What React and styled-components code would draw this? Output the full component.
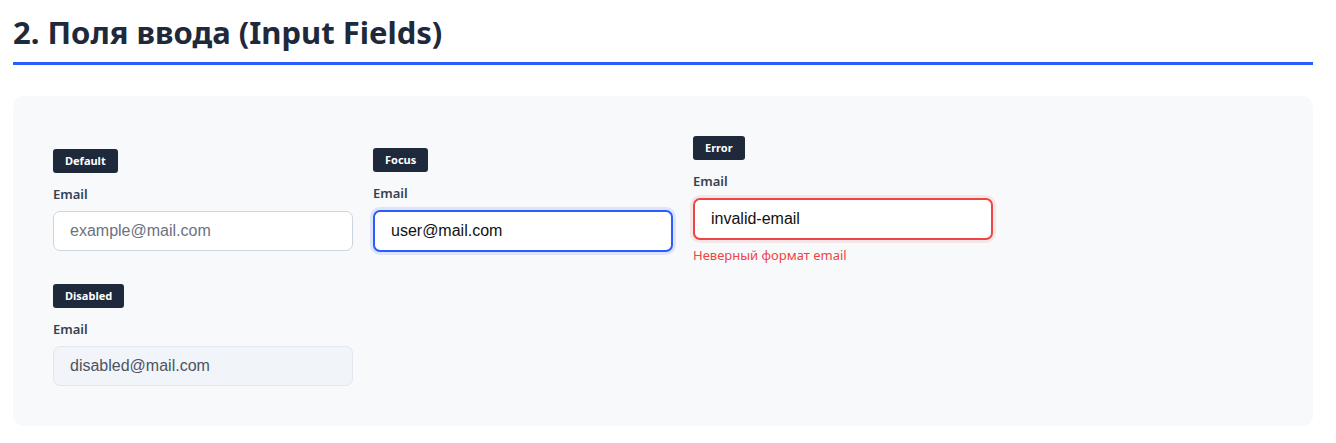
import React from 'react';
import styled, { createGlobalStyle } from 'styled-components';

const GlobalStyle = createGlobalStyle`
  * { box-sizing: border-box; }
  body {
    margin: 0;
    background: #fff;
    font-family: "Noto Sans", "Open Sans", sans-serif;
    color: #1e293b;
  }
`;

const Page = styled.section`
  width: 1300px;
  margin-left: 13px;
  padding-top: 14px;
`;

const Heading = styled.h2`
  margin: 0 0 31px;
  padding-bottom: 12px;
  border-bottom: 3px solid #2b5cff;
  font-size: 31px;
  line-height: 36px;
  font-weight: 700;
  color: #1e293b;
`;

const Panel = styled.div`
  background: #f8f9fb;
  border-radius: 10px;
  padding: 40px;
  display: flex;
  flex-wrap: wrap;
  align-items: center;
  gap: 20px;
`;

const Field = styled.div`
  width: 300px;
  display: flex;
  flex-direction: column;
  align-items: flex-start;
`;

const Badge = styled.span`
  background: #1e293b;
  color: #fff;
  font-size: 11px;
  font-weight: 700;
  line-height: 14px;
  padding: 5px 12px;
  border-radius: 3px;
  margin-bottom: 12px;
`;

const Label = styled.label`
  font-size: 13px;
  font-weight: 600;
  line-height: 18px;
  color: #334155;
  margin-bottom: 8px;
`;

const Input = styled.input`
  width: 100%;
  height: ${p => (p.$state === 'focus' || p.$state === 'error' ? '42px' : '40px')};
  padding: 0 16px;
  font-family: "Liberation Sans", Arial, sans-serif;
  font-size: 16px;
  color: #111;
  background: ${p => (p.disabled ? '#f1f4f8' : '#fff')};
  border: ${p =>
    p.$state === 'focus'
      ? '2px solid #2b5cff'
      : p.$state === 'error'
      ? '2px solid #ef4444'
      : p.disabled
      ? '1px solid #e2e8f0'
      : '1px solid #cbd5e1'};
  box-shadow: ${p =>
    p.$state === 'focus'
      ? '0 0 0 3px rgba(43, 92, 255, 0.12)'
      : p.$state === 'error'
      ? '0 0 0 3px rgba(239, 68, 68, 0.1)'
      : 'none'};
  border-radius: 7px;
  outline: none;

  &::placeholder { color: #6b7280; }
  &:disabled { color: #4b5563; opacity: 1; }
`;

const ErrorText = styled.span`
  margin-top: 6px;
  font-size: 13px;
  line-height: 18px;
  color: #ef4444;
`;

export default function App() {
  return (
    <Page>
      <GlobalStyle />
      <Heading>2. Поля ввода (Input Fields)</Heading>
      <Panel>
        <Field>
          <Badge>Default</Badge>
          <Label>Email</Label>
          <Input placeholder="example@mail.com" readOnly />
        </Field>
        <Field>
          <Badge>Focus</Badge>
          <Label>Email</Label>
          <Input $state="focus" defaultValue="user@mail.com" />
        </Field>
        <Field>
          <Badge>Error</Badge>
          <Label>Email</Label>
          <Input $state="error" defaultValue="invalid-email" />
          <ErrorText>Неверный формат email</ErrorText>
        </Field>
        <Field>
          <Badge>Disabled</Badge>
          <Label>Email</Label>
          <Input disabled defaultValue="disabled@mail.com" />
        </Field>
      </Panel>
    </Page>
  );
}
